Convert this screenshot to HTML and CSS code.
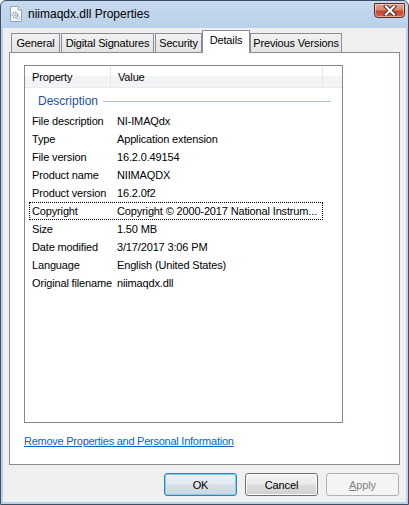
FILE: index.html
```html
<!DOCTYPE html>
<html>
<head>
<meta charset="utf-8">
<link rel="stylesheet" href="styles.css">
</head>
<body>
<div class="window">
  <div class="titlebar">
    <svg class="ficon" width="14" height="16" viewBox="0 0 14 16">
      <path d="M1.5 0.5 H9 L12.5 4 V15.5 H1.5 Z" fill="#fbfbfb" stroke="#9aa4ae"/>
      <path d="M9 0.5 V4 H12.5" fill="#e4e8ec" stroke="#9aa4ae"/>
      <circle cx="6" cy="9" r="2.6" fill="none" stroke="#7f9cc0" stroke-width="1.6" stroke-dasharray="1.4 1"/>
      <circle cx="6" cy="9" r="1" fill="#9fb8d6"/>
      <circle cx="9.3" cy="12" r="1.6" fill="none" stroke="#8aa6c8" stroke-width="1.2" stroke-dasharray="1 0.8"/>
    </svg>
    <span class="title">niimaqdx.dll Properties</span>
    <div class="close">
      <svg width="16" height="11" viewBox="0 0 16 11">
        <path d="M4 1.5 L12 9.5 M12 1.5 L4 9.5" stroke="#4b2a26" stroke-width="4" stroke-linecap="square"/>
        <path d="M4 1.5 L12 9.5 M12 1.5 L4 9.5" stroke="#ffffff" stroke-width="2.2" stroke-linecap="square"/>
      </svg>
    </div>
  </div>
  <div class="client">
    <div class="tabs">
      <div class="tab t-general">General</div>
      <div class="tab t-sig">Digital Signatures</div>
      <div class="tab t-sec">Security</div>
      <div class="tab t-det sel">Details</div>
      <div class="tab t-prev">Previous Versions</div>
    </div>
    <div class="panel">
      <div class="list">
        <div class="header">
          <div class="hcol c1">Property</div>
          <div class="hcol c2">Value</div>
          <div class="hcol c3"></div>
        </div>
        <div class="group"><span class="gtext">Description</span><span class="gline"></span></div>
        <div class="row"><span class="k">File description</span><span class="v">NI-IMAQdx</span></div>
        <div class="row"><span class="k">Type</span><span class="v">Application extension</span></div>
        <div class="row"><span class="k">File version</span><span class="v">16.2.0.49154</span></div>
        <div class="row"><span class="k">Product name</span><span class="v">NIIMAQDX</span></div>
        <div class="row"><span class="k">Product version</span><span class="v">16.2.0f2</span></div>
        <div class="row focus"><span class="k">Copyright</span><span class="v">Copyright © 2000-2017 National Instrum...</span></div>
        <div class="row"><span class="k">Size</span><span class="v">1.50 MB</span></div>
        <div class="row"><span class="k">Date modified</span><span class="v">3/17/2017 3:06 PM</span></div>
        <div class="row"><span class="k">Language</span><span class="v">English (United States)</span></div>
        <div class="row"><span class="k">Original filename</span><span class="v">niimaqdx.dll</span></div>
      </div>
      <a class="link" href="#">Remove Properties and Personal Information</a>
    </div>
    <div class="buttons">
      <div class="btn ok">OK</div>
      <div class="btn">Cancel</div>
      <div class="btn disabled"><u>A</u>pply</div>
    </div>
  </div>
</div>
</body>
</html>
```
FILE: styles.css
```css
html, body {
  margin: 0;
  padding: 0;
  background: #ffffff;
}
body {
  font-family: "Liberation Sans", Arial, sans-serif;
  font-size: 11px;
  letter-spacing: -0.15px;
  color: #000;
}
.window {
  width: 409px;
  height: 505px;
  box-sizing: border-box;
  border: 1px solid #3d4e66;
  border-radius: 6px 6px 0 0;
  background: linear-gradient(#c6d9ee 0, #b9d1ea 28px, #b9d1ea 100%);
  display: flex;
  flex-direction: column;
  overflow: hidden;
}
.titlebar {
  height: 27px;
  flex: none;
  display: flex;
  align-items: center;
  padding-left: 8px;
  box-sizing: border-box;
}
.ficon {
  margin-top: -1px;
}
.title {
  margin-left: 5px;
  font-size: 12px;
  letter-spacing: 0;
  color: #000;
  flex: 1;
  margin-top: -1px;
}
.close {
  width: 31px;
  height: 15px;
  margin-right: 3px;
  margin-top: -8px;
  box-sizing: border-box;
  border: 1px solid #5e2c24;
  border-radius: 0 0 4px 4px;
  background: linear-gradient(#e5a696 0%, #d88372 45%, #c7442d 55%, #d0644c 100%);
  box-shadow: inset 0 0 0 1px rgba(255,220,210,0.55);
  display: flex;
  align-items: center;
  justify-content: center;
}
.client {
  flex: 1;
  margin: 0 2px 2px 2px;
  background: #f0f0f0;
  display: flex;
  flex-direction: column;
}
.tabs {
  display: flex;
  align-items: flex-end;
  height: 22px;
  padding-top: 2px;
  padding-left: 8px;
  position: relative;
  z-index: 1;
}
.tab {
  height: 19px;
  box-sizing: border-box;
  border: 1px solid #898c95;
  border-bottom: none;
  background: linear-gradient(#f2f2f2, #e3e3e3);
  display: flex;
  align-items: center;
  justify-content: center;
  padding-bottom: 1px;
}
.t-general { width: 49px; margin-right: 1px; }
.t-sig { width: 93px; margin-right: 1px; }
.t-sec { width: 47px; }
.t-det { width: 48px; }
.t-prev { width: 92px; }
.tab.sel {
  height: 23px;
  margin-bottom: -1px;
  background: #ffffff;
  padding-bottom: 5px;
}
.panel {
  margin: 0 6px;
  height: 413px;
  box-sizing: border-box;
  border: 1px solid #898c95;
  background: #ffffff;
  padding: 12px 0 0 14px;
  display: flex;
  flex-direction: column;
  align-items: flex-start;
}
.list {
  width: 319px;
  height: 358px;
  box-sizing: border-box;
  border: 1px solid #828790;
  background: #fff;
}
.header {
  display: flex;
  height: 22px;
  background: linear-gradient(#ffffff 0, #ffffff 10px, #f3f4f6 10px, #f3f4f6 100%);
  border-bottom: 1px solid #e9ebee;
  box-sizing: border-box;
}
.hcol {
  box-sizing: border-box;
  display: flex;
  align-items: center;
  padding-left: 7px;
  border-right: 1px solid #e3e5e9;
}
.c1 { width: 86px; }
.c2 { width: 212px; }
.c3 { flex: 1; border-right: none; }
.group {
  height: 24px;
  display: flex;
  align-items: center;
  padding-left: 13px;
  padding-right: 11px;
  padding-top: 2px;
  box-sizing: border-box;
}
.gtext {
  font-size: 12px;
  letter-spacing: 0;
  color: #1e4f9c;
}
.gline {
  flex: 1;
  height: 1px;
  margin-left: 5px;
  background: #a9c0de;
}
.row {
  height: 18px;
  width: 294px;
  margin-left: 4px;
  box-sizing: border-box;
  border: 1px dotted transparent;
  display: flex;
  align-items: center;
}
.row.focus {
  border-color: #000;
}
.k {
  width: 87px;
  padding-left: 2px;
  box-sizing: border-box;
  flex: none;
  white-space: nowrap;
}
.v {
  flex: 1;
  white-space: nowrap;
}
.link {
  margin-top: 11px;
  color: #0066cc;
  text-decoration: underline;
  line-height: 14px;
  letter-spacing: -0.25px;
}
.buttons {
  display: flex;
  justify-content: flex-end;
  gap: 8px;
  margin-top: 8px;
  margin-right: 7px;
}
.btn {
  width: 73px;
  height: 23px;
  box-sizing: border-box;
  border: 1px solid #707070;
  border-radius: 3px;
  background: linear-gradient(#f2f2f2 0%, #ebebeb 48%, #dddddd 52%, #cfcfcf 100%);
  box-shadow: inset 0 0 0 1px #fbfbfb;
  display: flex;
  align-items: center;
  justify-content: center;
}
.btn.ok {
  border-color: #3c7fb1;
  background: linear-gradient(#eaf1f6 0%, #e2eaf0 48%, #d6e0e8 52%, #ccd7e0 100%);
  box-shadow: inset 0 0 0 1px #7ed1f5;
}
.btn.disabled {
  border-color: #adb2b5;
  background: #f4f4f4;
  box-shadow: none;
  color: #838383;
}
.btn u {
  text-decoration: underline;
}
```
